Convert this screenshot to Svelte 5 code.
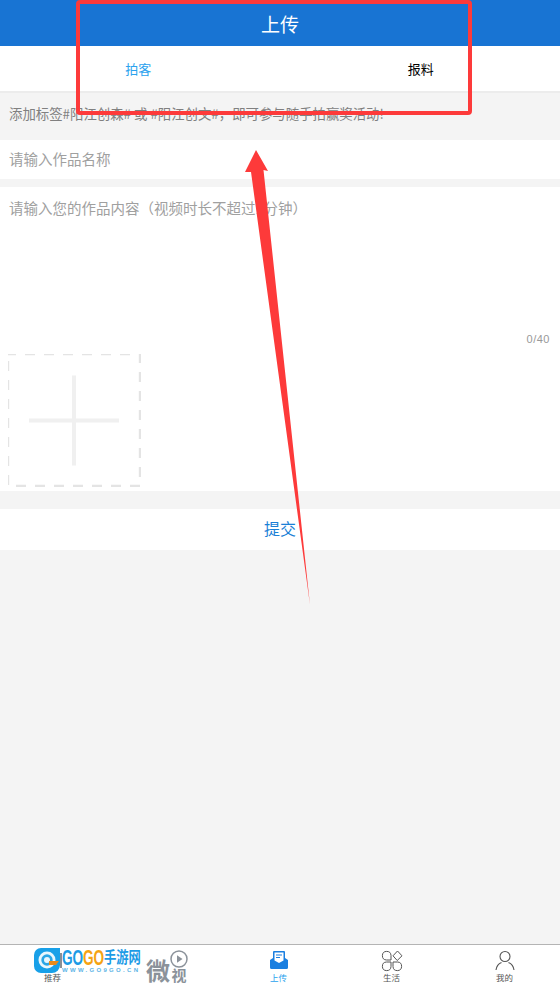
<script>
  let title = '上传';
  const navItems = [
    { key: 'home', label: '推荐' },
    { key: 'video', label: '' },
    { key: 'upload', label: '上传', active: true },
    { key: 'life', label: '生活' },
    { key: 'mine', label: '我的' }
  ];
</script>

<div class="page">
  <header class="topbar">{title}</header>

  <nav class="tabs">
    <span class="tab tab--active">拍客</span>
    <span class="tab">报料</span>
  </nav>

  <p class="hint">添加标签#阳江创森# 或 #阳江创文#，即可参与随手拍赢奖活动!</p>

  <div class="field">请输入作品名称</div>

  <section class="content">
    <p class="content__placeholder">请输入您的作品内容（视频时长不超过1分钟）</p>
    <div class="content__count">0/40</div>
    <svg class="upload" viewBox="0 0 133 133" width="133" height="133" fill="none">
      <rect width="132" height="132" stroke="#e4e4e4" stroke-width="2.400" stroke-dasharray="10 9" stroke-dashoffset="2"/>
      <path d="M21 66.500h90M66 21.500v90" stroke="#f0f0f0" stroke-width="4"/>
    </svg>
  </section>

  <button class="submit" type="button">提交</button>

  <div class="spacer"></div>

  <footer class="nav">
    {#each navItems as item}
      <div class="nav__item" class:nav__item--active={item.active}>
        <div class="nav__slot">
          {#if item.key === 'upload'}
            <svg viewBox="0 0 20 20" width="20" height="20">
              <path d="M5 1h10a1 1 0 0 1 1 1v6l3 2v7.500a1.500 1.500 0 0 1-1.500 1.500h-15A1.500 1.500 0 0 1 1 17.500V10l3-2V2a1 1 0 0 1 1-1z" fill="#1a7fe0"/>
              <path d="M5.500 2.500h9v8L10 13l-4.500-2.500z" fill="#fff"/>
              <path d="M7 5h6M7 7.500h4" stroke="#1a7fe0" stroke-width="1.200" fill="none"/>
            </svg>
          {:else if item.key === 'life'}
            <svg viewBox="0 0 22 22" width="22" height="22" fill="none" stroke="#555" stroke-width="1">
              <path d="M10 10H5.500A4.300 4.300 0 1 1 10 5.500z"/>
              <path d="M16.500 1l4.500 4.800-4.800 4.700-4.200-4.700z"/>
              <path d="M10 12H5.500A4.300 4.300 0 1 0 10 16.500z"/>
              <path d="M12 12h4.500A4.300 4.300 0 1 1 12 16.500z"/>
            </svg>
          {:else if item.key === 'mine'}
            <svg viewBox="0 0 22 22" width="22" height="22" fill="none" stroke="#555" stroke-width="1.100">
              <circle cx="11" cy="6.500" r="5"/>
              <path d="M2 20c.5-4 3-6.500 5.500-7.500M20 20c-.5-4-3-6.500-5.500-7.500"/>
            </svg>
          {/if}
        </div>
        {#if item.label}<span class="nav__label">{item.label}</span>{/if}
      </div>
    {/each}
  </footer>

  <!-- 水印贴在导航栏上 -->
  <div class="logo">
    <svg class="logo__mark" viewBox="0 0 28 26" width="28" height="26">
      <path d="M7 0h19v17a8 8 0 0 1-8 8H7a7 7 0 0 1-7-7V7a7 7 0 0 1 7-7z" fill="#18a0e8"/>
      <circle cx="13" cy="12" r="8.500" fill="#e8f6fd"/>
      <circle cx="13" cy="12" r="5.700" fill="#2aa6e6"/>
      <circle cx="13" cy="12" r="3" fill="#e8f6fd"/>
      <path d="M15 13h10l-3 4h-7z" fill="#e88a1a"/>
      <path d="M26 5h2v15h-2z" fill="#8a8f94"/>
    </svg>
    <div class="logo__text">
      <div class="logo__name">
        <span class="logo__go logo__go--blue">GO</span>
        <span class="logo__go logo__go--orange">GO</span>
        <span class="logo__cn">手游网</span>
      </div>
      <div class="logo__url">WWW.GO9GO.CN</div>
    </div>
  </div>

  <div class="weishi">
    <span class="weishi__wei">微</span>
    <div class="weishi__right">
      <svg viewBox="0 0 18 18" width="18" height="18" fill="none">
        <circle cx="9" cy="9" r="8" stroke="#8b929a" stroke-width="1.500"/>
        <path d="M7 5.200l5.500 3.800L7 12.800z" fill="#8b929a"/>
      </svg>
      <span class="weishi__shi">视</span>
    </div>
  </div>

  <!-- 截图上的红色标注 -->
  <div class="note-box"></div>
  <svg class="note-arrow" viewBox="0 0 560 983" width="560" height="983">
    <path d="M256 150L268 171L263.500 170L310 605L251 172L245 172z" fill="#fd3a3a"/>
  </svg>
</div>

<style>
  :global(body) {
    margin: 0;
  }

  .page {
    position: relative;
    display: flex;
    flex-direction: column;
    width: 560px;
    height: 983px;
    overflow: hidden;
    background-color: #f4f4f4;
    font-family: "Noto Sans CJK SC", "Liberation Sans", sans-serif;
  }

  .topbar {
    flex: none;
    height: 46px;
    line-height: 47px;
    text-align: center;
    font-size: 19px;
    color: #fff;
    background-color: #1874d3;
  }

  .tabs {
    flex: none;
    display: flex;
    width: 565px;
    height: 45px;
    margin-left: -3px;
    background-color: #fff;
    border-bottom: 2px solid #ececec;
  }

  .tab {
    width: 50%;
    line-height: 46px;
    text-align: center;
    font-size: 13px;
    color: #000;
  }

  .tab--active {
    color: #2ba2ee;
  }

  .hint {
    flex: none;
    height: 47px;
    margin: 0;
    padding-left: 9px;
    line-height: 40px;
    font-size: 13.400px;
    color: #808080;
    white-space: nowrap;
  }

  .field {
    flex: none;
    height: 39px;
    padding-left: 9px;
    line-height: 38px;
    font-size: 14.500px;
    color: #a0a0a0;
    background-color: #fff;
  }

  .content {
    flex: none;
    position: relative;
    height: 304px;
    margin-top: 8px;
    background-color: #fff;
  }

  .content__placeholder {
    margin: 0;
    padding: 11px 0 0 9px;
    line-height: 20px;
    font-size: 14.500px;
    color: #a0a0a0;
  }

  .content__count {
    position: absolute;
    top: 146px;
    right: 10px;
    font-size: 11px;
    letter-spacing: 0.500px;
    color: #999;
    font-family: "Liberation Sans", sans-serif;
  }

  .upload {
    position: absolute;
    left: 8px;
    top: 167px;
  }

  .submit {
    flex: none;
    height: 41px;
    margin-top: 18px;
    padding: 0 0 3px;
    border: 0;
    font-family: inherit;
    font-size: 16px;
    color: #1a7fd6;
    background-color: #fff;
  }

  .spacer {
    flex: 1;
  }

  .nav {
    flex: none;
    display: flex;
    width: 565px;
    height: 38px;
    margin-left: -4px;
    background-color: #fff;
    border-top: 1px solid #b4b4b4;
  }

  .nav__item {
    flex: 1;
    display: flex;
    flex-direction: column;
    align-items: center;
    padding-top: 5px;
  }

  .nav__slot {
    display: flex;
    justify-content: center;
    height: 22px;
  }

  .nav__label {
    margin-top: 1px;
    line-height: 9px;
    font-size: 8.500px;
    color: #555;
  }

  .nav__item--active .nav__label {
    color: #2ba2ee;
  }

  .logo {
    position: absolute;
    left: 34px;
    top: 948px;
    display: flex;
  }

  .logo__text {
    display: flex;
    flex-direction: column;
  }

  .logo__name {
    display: flex;
    height: 19px;
    line-height: 19px;
  }

  .logo__go {
    width: 21px;
    font-family: "Liberation Sans", sans-serif;
    font-size: 22px;
    font-weight: 700;
    transform: scaleX(0.62);
    transform-origin: left;
  }

  .logo__go--blue {
    color: #1c9be6;
  }

  .logo__go--orange {
    color: #f5a313;
  }

  .logo__cn {
    font-size: 12.300px;
    font-weight: 700;
    color: #1c9be6;
    transform: scaleY(1.25);
  }

  .logo__url {
    font-family: "Liberation Sans", sans-serif;
    font-size: 6px;
    font-weight: 700;
    line-height: 7px;
    letter-spacing: 2.300px;
    color: #5cb4e6;
  }

  .weishi {
    position: absolute;
    left: 146px;
    top: 950px;
    display: flex;
    align-items: flex-end;
    height: 32px;
    color: #8b929a;
  }

  .weishi__wei {
    font-size: 24px;
    font-weight: 700;
    line-height: 24px;
  }

  .weishi__right {
    display: flex;
    flex-direction: column;
    align-items: center;
  }

  .weishi__shi {
    font-size: 15px;
    font-weight: 700;
    line-height: 14px;
  }

  .note-box {
    position: absolute;
    left: 76px;
    top: 0;
    width: 396px;
    height: 115px;
    box-sizing: border-box;
    border: 4px solid #fd3a3a;
    border-radius: 4px;
  }

  .note-arrow {
    position: absolute;
    left: 0;
    top: 0;
    pointer-events: none;
  }
</style>
